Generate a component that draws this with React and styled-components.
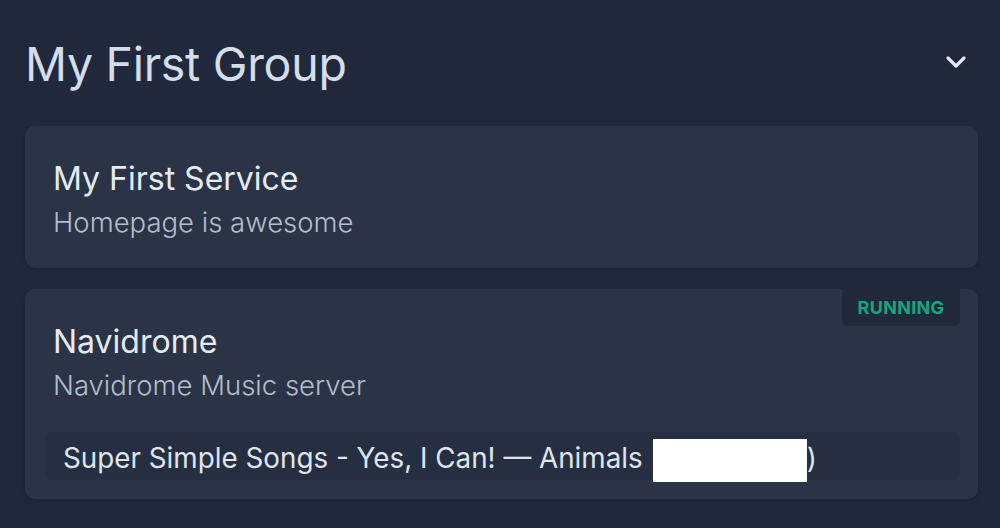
import React from 'react';
import styled, { createGlobalStyle } from 'styled-components';

const GlobalStyle = createGlobalStyle`
  html, body {
    margin: 0;
    padding: 0;
    background: #1f293b;
  }
  body {
    font-family: Inter, "Noto Sans", sans-serif;
    -webkit-font-smoothing: antialiased;
  }
`;

const services = [
  { id: 1, name: 'My First Service', description: 'Homepage is awesome' },
  {
    id: 2,
    name: 'Navidrome',
    description: 'Navidrome Music server',
    status: 'RUNNING',
    nowPlaying: 'Super Simple Songs - Yes, I Can! \u2014 Animals',
  },
];

const Chevron = () => (
  <svg width="32" height="32" viewBox="0 0 24 24" fill="none" stroke="#e2e8f0" strokeWidth="2.4" strokeLinecap="round" strokeLinejoin="round">
    <path d="M6 9l6 6 6-6" />
  </svg>
);

const App = () => (
  <Wrapper>
    <GlobalStyle />
    <GroupHeader>
      <GroupTitle>My First Group</GroupTitle>
      <Toggle><Chevron /></Toggle>
    </GroupHeader>
    <List>
      {services.map((s) => (
        <Card key={s.id}>
          {s.status && <Badge>{s.status}</Badge>}
          <CardTitle>{s.name}</CardTitle>
          <CardDescrip>{s.description}</CardDescrip>
          {s.nowPlaying && (
            <NowPlaying>
              <span>{s.nowPlaying}</span>
              <Redacted />
              <span>)</span>
            </NowPlaying>
          )}
        </Card>
      ))}
    </List>
  </Wrapper>
);

const Wrapper = styled.div`
  width: 1000px;
  height: 528px;
  box-sizing: border-box;
  padding: 26px 22px 0 25px;
  overflow: hidden;
`;

const GroupHeader = styled.div`
  display: flex;
  align-items: center;
  justify-content: space-between;
  height: 76px;
  margin-bottom: 24px;
`;

const GroupTitle = styled.h1`
  margin: 0;
  font-size: 46.5px;
  font-weight: 400;
  color: #d4dde9;
  letter-spacing: -0.3px;
`;

const Toggle = styled.div`
  display: flex;
  align-items: center;
  margin-right: 6px;
  margin-top: -4px;
`;

const List = styled.div`
  display: flex;
  flex-direction: column;
  gap: 21px;
`;

const Card = styled.div`
  position: relative;
  background: #2a3446;
  border-radius: 10px;
  padding: 33px 18px 19px 28px;
  box-shadow: 0 2px 4px rgba(0, 0, 0, 0.15);
  min-height: 142px;
  box-sizing: border-box;
`;

const CardTitle = styled.div`
  font-size: 32px;
  font-weight: 400;
  color: #e5ebf3;
  line-height: 40px;
`;

const CardDescrip = styled.div`
  margin-top: 3px;
  font-size: 27.5px;
  font-weight: 300;
  color: #b3bdcb;
  line-height: 40px;
`;

const Badge = styled.div`
  position: absolute;
  top: 0;
  right: 18px;
  width: 118px;
  height: 37px;
  display: flex;
  align-items: center;
  justify-content: center;
  background: #1f293a;
  border-radius: 0 0 6px 6px;
  color: #16a57d;
  font-size: 18px;
  font-weight: 700;
  letter-spacing: 0.3px;
`;

const NowPlaying = styled.div`
  display: flex;
  align-items: center;
  margin: 27px 0 0 -8px;
  height: 48px;
  padding: 3px 0 0 18px;
  box-sizing: border-box;
  background: #252f41;
  border-radius: 8px;
  font-size: 27.8px;
  color: #dfe5ee;
  white-space: nowrap;
`;

const Redacted = styled.span`
  display: inline-block;
  width: 154px;
  height: 43px;
  margin: 6px 0 0 10px;
  background: #fff;
`;

export default App;
